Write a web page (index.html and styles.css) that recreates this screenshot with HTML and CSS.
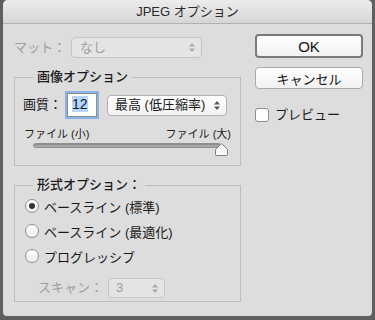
FILE: index.html
```html
<!DOCTYPE html>
<html lang="ja">
<head>
    <meta charset="UTF-8">
    <meta name="viewport" content="width=device-width, initial-scale=1.0">
    <title>JPEG オプション</title>
    <link rel="stylesheet" href="styles.css">
</head>
<body>
    <div class="dialog">
        <div class="titlebar">JPEG オプション</div>

        <div class="content">
            <div class="left">
                <div class="row matte">
                    <span class="label disabled matte-label">マット：</span>
                    <div class="select disabled matte-select">
                        <span>なし</span>
                        <svg class="arrows" width="6" height="9" viewBox="0 0 6 9"><path d="M3 0L6 3.5H0Z M3 9L6 5.5H0Z"/></svg>
                    </div>
                </div>

                <fieldset class="group image-group">
                    <legend>画像オプション</legend>
                    <div class="row quality">
                        <span class="label quality-label">画質：</span>
                        <div class="num-input"><span class="selected">12</span></div>
                        <div class="select quality-select">
                            <span>最高 (低圧縮率)</span>
                            <svg class="arrows" width="6" height="9" viewBox="0 0 6 9"><path d="M3 0L6 3.5H0Z M3 9L6 5.5H0Z"/></svg>
                        </div>
                    </div>
                    <div class="size-labels">
                        <span>ファイル (小)</span>
                        <span>ファイル (大)</span>
                    </div>
                    <div class="slider">
                        <div class="track"></div>
                        <svg class="thumb" width="13" height="13" viewBox="0 0 13 13">
                            <path d="M6.5 0.5L12.5 6.5V11.5Q12.5 12.5 11.5 12.5H1.5Q0.5 12.5 0.5 11.5V6.5Z" fill="#fafafa" stroke="#7d7d7d"/>
                        </svg>
                    </div>
                </fieldset>

                <fieldset class="group format-group">
                    <legend>形式オプション：</legend>
                    <label class="radio-row"><span class="radio checked"></span>ベースライン (標準)</label>
                    <label class="radio-row"><span class="radio"></span>ベースライン (最適化)</label>
                    <label class="radio-row"><span class="radio"></span>プログレッシブ</label>
                    <div class="row scan">
                        <span class="label disabled scan-label">スキャン：</span>
                        <div class="select disabled scan-select">
                            <span>3</span>
                            <svg class="arrows" width="6" height="9" viewBox="0 0 6 9"><path d="M3 0L6 3.5H0Z M3 9L6 5.5H0Z"/></svg>
                        </div>
                    </div>
                </fieldset>
            </div>

            <div class="right">
                <button class="btn btn-default">OK</button>
                <button class="btn">キャンセル</button>
                <label class="check-row"><span class="checkbox"></span>プレビュー</label>
            </div>
        </div>
    </div>
</body>
</html>
```

FILE: styles.css
```css
body {
    margin: 0;
    padding: 0;
    background-color: #5f5f5f;
    font-family: "Liberation Sans", "Noto Sans CJK JP", sans-serif;
    font-size: 13px;
    color: #1a1a1a;
}
.dialog {
    margin-left: 3px;
    width: 369px;
    height: 316px;
    background-color: #dddddd;
    border-radius: 5px 5px 4px 4px;
    overflow: hidden;
}
.titlebar {
    height: 23px;
    line-height: 24px;
    text-align: center;
    color: #2b2b2b;
    background: linear-gradient(#ececec, #d6d6d6);
    border-bottom: 1px solid #b1b1b1;
}
.content {
    display: flex;
    justify-content: space-between;
    padding: 10px 9px 0 11px;
}
.left {
    width: 227px;
    padding-top: 3px;
}
.row {
    display: flex;
    align-items: center;
}
.label {
    line-height: 16px;
}
.disabled {
    color: #9e9e9e;
}
.matte-label {
    width: 57px;
}
.select {
    display: flex;
    align-items: center;
    justify-content: space-between;
    box-sizing: border-box;
    padding: 0 6px 0 8px;
    background: linear-gradient(#fefefe, #f3f3f3);
    border: 1px solid #b2b2b2;
    border-radius: 4px;
    line-height: 16px;
}
.select .arrows {
    fill: #555;
}
.select.disabled {
    background: #e4e4e4;
    border-color: #c6c6c6;
}
.select.disabled .arrows {
    fill: #a8a8a8;
}
.matte-select {
    width: 131px;
    height: 21px;
}
.group {
    margin: 11px 0 0 0;
    padding: 0 9px 0 8px;
    border: 1px solid #bdbdbd;
    min-width: 0;
}
.group legend {
    margin-left: 10px;
    padding: 0 4px;
    line-height: 16px;
    font-weight: 500;
}
.image-group {
    height: 87px;
    padding-top: 8px;
}
.quality-label {
    width: 44px;
}
.num-input {
    box-sizing: border-box;
    width: 30px;
    height: 24px;
    padding: 2px 0 0 4px;
    background: #fff;
    border: 1px solid #8f8f8f;
    box-shadow: 0 0 0 2px #8ab4e8;
    line-height: 17px;
    font-size: 14px;
}
.num-input .selected {
    background-color: #b5d5fd;
}
.quality-select {
    margin-left: 10px;
    width: 120px;
    height: 21px;
    padding-left: 7px;
}
.size-labels {
    display: flex;
    justify-content: space-between;
    margin-top: 10px;
    padding-left: 1px;
    line-height: 15px;
    font-size: 11px;
}
.slider {
    position: relative;
    margin: 1px 0 0 10px;
    width: 188px;
    height: 13px;
}
.track {
    height: 3px;
    background: #a9a9a9;
    border: 1px solid #8d8d8d;
    border-radius: 3px;
    box-shadow: inset 0 1px 1px #8a8a8a;
}
.thumb {
    position: absolute;
    right: -7px;
    top: 0;
}
.format-group {
    height: 120px;
    padding-top: 3px;
}
.radio-row {
    display: flex;
    align-items: center;
    height: 20px;
    margin-bottom: 5px;
}
.radio {
    box-sizing: border-box;
    width: 14px;
    height: 14px;
    margin: 0 5px 0 2px;
    border: 1px solid #8e8e8e;
    border-radius: 50%;
    background: linear-gradient(#ffffff, #efefef);
    display: flex;
    align-items: center;
    justify-content: center;
}
.radio.checked::after {
    content: "";
    width: 6px;
    height: 6px;
    border-radius: 50%;
    background: #333;
}
.scan {
    margin-top: 12px;
    padding-left: 15px;
}
.scan-label {
    width: 70px;
}
.scan-select {
    width: 57px;
    height: 20px;
    padding-left: 7px;
}
.right {
    width: 108px;
    display: flex;
    flex-direction: column;
}
.btn {
    height: 22px;
    margin-bottom: 11px;
    padding: 0;
    font-family: inherit;
    font-size: 13px;
    color: #111;
    background: linear-gradient(#ffffff, #f1f1f1);
    border: 1px solid #a9a9a9;
    border-radius: 4px;
}
.btn-default {
    height: 24px;
    margin-bottom: 9px;
    border: 2px solid #7a7a7a;
    font-size: 15px;
}
.check-row {
    display: flex;
    align-items: center;
    margin-top: 7px;
    line-height: 16px;
}
.checkbox {
    box-sizing: border-box;
    width: 14px;
    height: 14px;
    margin-right: 6px;
    background: #fff;
    border: 1px solid #8e8e8e;
    border-radius: 3px;
}
```
